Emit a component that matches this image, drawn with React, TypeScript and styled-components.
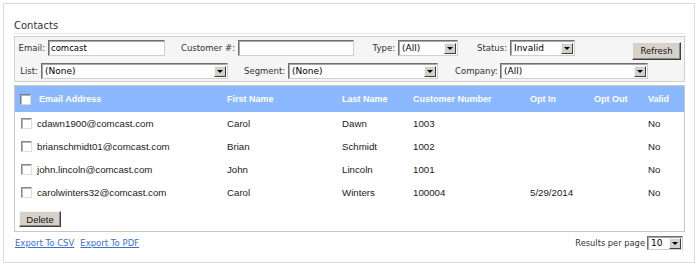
import React from 'react'
import styled, { createGlobalStyle } from 'styled-components'

const GlobalStyle = createGlobalStyle`
  body {
    margin: 0;
    background: #ffffff;
  }
`

const Panel = styled.div`
  box-sizing: border-box;
  margin: 3px 0 0 3px;
  width: 692px;
  height: 260px;
  border: 1px solid #dadada;
  padding: 14px 9px 0 10px;
  font-family: 'DejaVu Sans', Verdana, sans-serif;
  color: #333;
`

const Title = styled.div`
  font-size: 10px;
  line-height: 15px;
  color: #333;
  border-bottom: 1px solid #e8e8e8;
  margin-bottom: 2px;
`

const FilterBox = styled.div`
  border: 1px solid #d0d0d0;
  background: #f5f5f5;
  padding: 3px 3px 2px 3px;
  display: flex;
  flex-direction: column;
  gap: 3px;
`

const FilterRow = styled.div<{ $h: number }>`
  display: flex;
  align-items: flex-start;
  height: ${(p) => p.$h}px;
`

const Field = styled.div<{ $gap?: number }>`
  display: flex;
  align-items: center;
  margin-left: ${(p) => p.$gap ?? 0}px;
`

const Label = styled.label<{ $w: number }>`
  box-sizing: border-box;
  width: ${(p) => p.$w}px;
  padding-right: 3px;
  text-align: right;
  font-size: 8.5px;
  color: #333;
  white-space: nowrap;
`

const TextInput = styled.input<{ $w: number }>`
  box-sizing: border-box;
  width: ${(p) => p.$w}px;
  height: 16px;
  margin: 0;
  padding: 0 2px;
  border: 1px solid;
  border-color: #6f6f6f #cfcfcf #cfcfcf #6f6f6f;
  box-shadow: inset 1px 1px 0 #a8a8a8;
  background: #fff;
  font-family: 'DejaVu Sans', Verdana, sans-serif;
  font-size: 8.5px;
  color: #000;
  outline: none;
`

const SelectBox = styled.div<{ $w: number; $h?: number }>`
  box-sizing: border-box;
  width: ${(p) => p.$w}px;
  height: ${(p) => p.$h ?? 16}px;
  display: flex;
  align-items: center;
  border: 1px solid;
  border-color: #6f6f6f #cfcfcf #cfcfcf #6f6f6f;
  box-shadow: inset 1px 1px 0 #a8a8a8;
  background: #fff;
`

const SelectValue = styled.span`
  flex: 1;
  padding-left: 3px;
  font-size: 9px;
  color: #000;
  white-space: nowrap;
  overflow: hidden;
`

const ArrowButton = styled.span`
  box-sizing: border-box;
  width: 12px;
  height: 11px;
  margin-right: 1px;
  display: flex;
  align-items: center;
  justify-content: center;
  background: #d4d0c8;
  border: 1px solid;
  border-color: #f4f4f4 #404040 #404040 #f4f4f4;

  &::after {
    content: '';
    border-left: 3px solid transparent;
    border-right: 3px solid transparent;
    border-top: 3px solid #000;
  }
`

const Button = styled.button<{ $w: number; $h: number }>`
  box-sizing: border-box;
  width: ${(p) => p.$w}px;
  height: ${(p) => p.$h}px;
  padding: 0;
  background: #d6d2ca;
  border: 1px solid;
  border-color: #f4f4f4 #404040 #404040 #f4f4f4;
  box-shadow: inset -1px -1px 0 #8a8a8a;
  color: #111;
  cursor: pointer;
`

const RefreshButton = styled(Button)`
  margin-left: auto;
  margin-top: 2px;
  font-family: 'DejaVu Sans', Verdana, sans-serif;
  font-size: 8.5px;
`

const DeleteButton = styled(Button)`
  margin: 7px 0 4px 4px;
  font-family: 'Liberation Sans', Arial, sans-serif;
  font-size: 9.5px;
`

const TableBox = styled.div`
  margin-top: 3px;
  border: 1px solid #c9c9c9;
`

const Grid = styled.table`
  width: 100%;
  border-collapse: collapse;
  table-layout: fixed;
  font-family: 'Liberation Sans', Arial, sans-serif;
`

const HeadRow = styled.tr`
  height: 26px;
  background: #8cb8ff;
`

const HeadCell = styled.th<{ $pad?: number }>`
  padding: 0 0 0 ${(p) => p.$pad ?? 0}px;
  text-align: left;
  font-size: 9px;
  font-weight: bold;
  color: #fff;
  white-space: nowrap;
`

const BodyRow = styled.tr`
  height: 23px;
`

const Cell = styled.td<{ $pad?: number }>`
  padding: 0 0 0 ${(p) => p.$pad ?? 0}px;
  font-size: 9.7px;
  color: #1a1a1a;
  white-space: nowrap;
`

const Check = styled.span<{ $head?: boolean }>`
  box-sizing: border-box;
  display: block;
  width: 11px;
  height: 11px;
  background: #fff;
  border: 1px solid;
  border-color: ${(p) => (p.$head ? '#7a7a7a #d8d8d8 #d8d8d8 #7a7a7a' : '#8a8a8a #dedede #dedede #8a8a8a')};
  box-shadow: inset 1px 1px 0 #b5b5b5;
`

const Footer = styled.div`
  display: flex;
  align-items: center;
  justify-content: space-between;
  margin-top: 3px;
  padding: 0 2px 0 1px;
  height: 16px;
`

const Links = styled.div`
  display: flex;
  gap: 6px;
`

const Link = styled.a`
  font-size: 8.5px;
  color: #3a70d4;
  text-decoration: underline;
  cursor: pointer;
`

const PerPage = styled.div`
  display: flex;
  align-items: center;
  gap: 2px;
  font-size: 8.3px;
  color: #333;
`

type Contact = {
  email: string
  first: string
  last: string
  number: string
  optIn: string
  optOut: string
  valid: string
}

const contacts: Contact[] = [
  { email: 'cdawn1900@comcast.com', first: 'Carol', last: 'Dawn', number: '1003', optIn: '', optOut: '', valid: 'No' },
  { email: 'brianschmidt01@comcast.com', first: 'Brian', last: 'Schmidt', number: '1002', optIn: '', optOut: '', valid: 'No' },
  { email: 'john.lincoln@comcast.com', first: 'John', last: 'Lincoln', number: '1001', optIn: '', optOut: '', valid: 'No' },
  { email: 'carolwinters32@comcast.com', first: 'Carol', last: 'Winters', number: '100004', optIn: '5/29/2014', optOut: '', valid: 'No' },
]

function Select({ w, value, h }: { w: number; value: string; h?: number }) {
  return (
    <SelectBox $w={w} $h={h}>
      <SelectValue>{value}</SelectValue>
      <ArrowButton />
    </SelectBox>
  )
}

export default function App() {
  return (
    <>
      <GlobalStyle />
      <Panel>
        <Title>Contacts</Title>
        <FilterBox>
          <FilterRow $h={20}>
            <Field>
              <Label $w={30}>Email:</Label>
              <TextInput $w={117} defaultValue="comcast" />
            </Field>
            <Field $gap={16}>
              <Label $w={57}>Customer #:</Label>
              <TextInput $w={116} />
            </Field>
            <Field $gap={18}>
              <Label $w={26}>Type:</Label>
              <Select w={60} value="(All)" />
            </Field>
            <Field $gap={19}>
              <Label $w={33}>Status:</Label>
              <Select w={65} value="Invalid" />
            </Field>
            <RefreshButton $w={49} $h={18}>Refresh</RefreshButton>
          </FilterRow>
          <FilterRow $h={16}>
            <Field>
              <Label $w={23}>List:</Label>
              <Select w={187} value="(None)" />
            </Field>
            <Field $gap={16}>
              <Label $w={44}>Segment:</Label>
              <Select w={150} value="(None)" />
            </Field>
            <Field $gap={17}>
              <Label $w={45}>Company:</Label>
              <Select w={148} value="(All)" />
            </Field>
          </FilterRow>
        </FilterBox>

        <TableBox>
          <Grid>
            <colgroup>
              <col style={{ width: 22 }} />
              <col style={{ width: 190 }} />
              <col style={{ width: 115 }} />
              <col style={{ width: 71 }} />
              <col style={{ width: 117 }} />
              <col style={{ width: 64 }} />
              <col style={{ width: 54 }} />
              <col />
            </colgroup>
            <thead>
              <HeadRow>
                <HeadCell $pad={5}>
                  <Check $head />
                </HeadCell>
                <HeadCell $pad={2}>Email Address</HeadCell>
                <HeadCell>First Name</HeadCell>
                <HeadCell>Last Name</HeadCell>
                <HeadCell>Customer Number</HeadCell>
                <HeadCell>Opt In</HeadCell>
                <HeadCell>Opt Out</HeadCell>
                <HeadCell>Valid</HeadCell>
              </HeadRow>
            </thead>
            <tbody>
              {contacts.map((c) => (
                <BodyRow key={c.email}>
                  <Cell $pad={6}>
                    <Check />
                  </Cell>
                  <Cell>{c.email}</Cell>
                  <Cell>{c.first}</Cell>
                  <Cell>{c.last}</Cell>
                  <Cell>{c.number}</Cell>
                  <Cell>{c.optIn}</Cell>
                  <Cell>{c.optOut}</Cell>
                  <Cell>{c.valid}</Cell>
                </BodyRow>
              ))}
            </tbody>
          </Grid>
          <DeleteButton $w={42} $h={16}>Delete</DeleteButton>
        </TableBox>

        <Footer>
          <Links>
            <Link>Export To CSV</Link>
            <Link>Export To PDF</Link>
          </Links>
          <PerPage>
            Results per page
            <Select w={36} h={14} value="10" />
          </PerPage>
        </Footer>
      </Panel>
    </>
  )
}
